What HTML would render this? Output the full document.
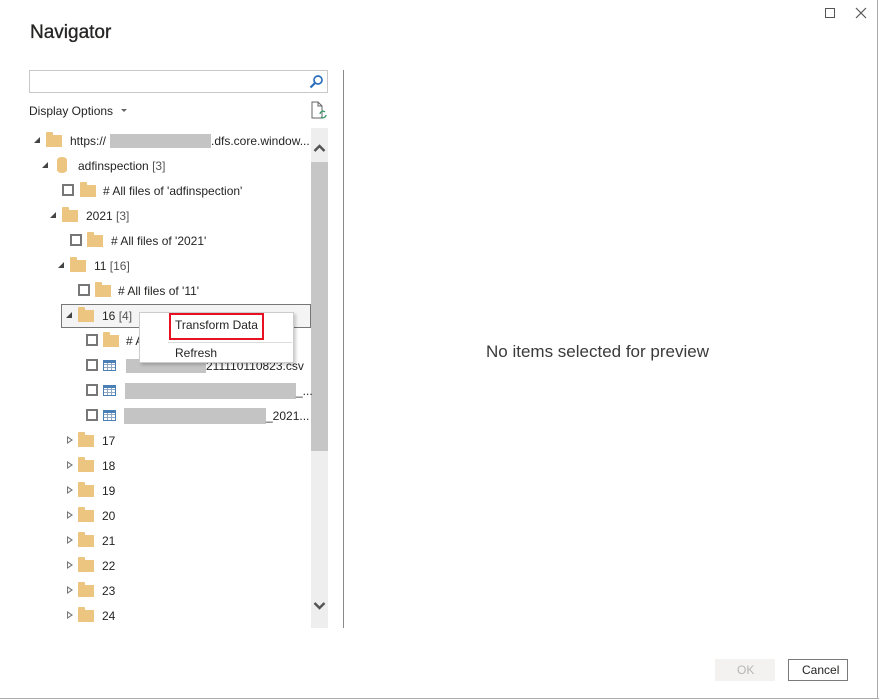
<!DOCTYPE html>
<html><head><meta charset="utf-8"><style>
*{box-sizing:border-box;margin:0;padding:0}
body{width:879px;height:700px;background:#fff;position:relative;overflow:hidden;font-family:"Liberation Sans",sans-serif;font-size:12px;color:#252423}
.a{position:absolute}
.t{position:absolute;white-space:nowrap;line-height:14px}
.f{position:absolute;width:16px;height:12px;background:#ecc581}
.f:before{content:"";position:absolute;left:0;top:-3px;width:7px;height:3px;background:#ecc581;border-radius:1px 1px 0 0}
.cb{position:absolute;width:12px;height:12px;border:2px solid #777;background:#fff}
.tri{position:absolute;width:0;height:0;border-left:6px solid transparent;border-bottom:6px solid #444}
.tro{position:absolute;width:0;height:0;border-top:4px solid transparent;border-bottom:4px solid transparent;border-left:6px solid #777}
.tro:after{content:"";position:absolute;left:-5px;top:-2px;border-top:2px solid transparent;border-bottom:2px solid transparent;border-left:3px solid #fff}
.g{position:absolute;height:14px;background:#c4c4c4}
.tb{position:absolute;width:13px;height:11px;border:1px solid #4a7fb5;background:
linear-gradient(#4a7fb5,#4a7fb5) 0 0/100% 2px no-repeat,
repeating-linear-gradient(90deg,transparent 0 3px,#8fa8c4 3px 4px),
repeating-linear-gradient(0deg,transparent 0 2px,#8fa8c4 2px 3px)}
</style></head><body>
<div class="a" style="right:1px;top:0;width:1px;height:699px;background:#aaa"></div>
<div class="a" style="left:0;bottom:1px;width:879px;height:1px;background:#aaa"></div>
<div class="a" style="left:825px;top:8px;width:10px;height:10px;border:1px solid #555"></div>
<svg class="a" style="left:855px;top:7px" width="12" height="12"><path d="M1 1L11 11M11 1L1 11" stroke="#555" stroke-width="1.2"/></svg>
<div class="t" style="left:30px;top:22px;font-size:19px;line-height:22px;color:#252423;-webkit-text-stroke:0.3px #252423">Navigator</div>
<div class="a" style="left:29px;top:70px;width:299px;height:23px;border:1px solid #c8c8c8"></div>
<svg class="a" style="left:309px;top:74px" width="15" height="15"><circle cx="9" cy="6" r="4" fill="none" stroke="#2a6ebb" stroke-width="1.7"/><path d="M6 9L1.5 13.5" stroke="#2a6ebb" stroke-width="2.2"/></svg>
<div class="t" style="left:29px;top:104px">Display Options</div>
<div class="a" style="left:121px;top:109px;border-left:3px solid transparent;border-right:3px solid transparent;border-top:3px solid #666"></div>
<svg class="a" style="left:311px;top:101px" width="17" height="20"><path d="M1 1H7L11 5V17H1Z" fill="#fff" stroke="#666"/><path d="M7 1V5H11" fill="none" stroke="#666"/><path d="M9 13a3 3 0 0 1 5-2M15 14a3 3 0 0 1-5 2" fill="none" stroke="#3a9a6a" stroke-width="1.3"/></svg>
<div class="a" style="left:311px;top:128px;width:17px;height:500px;background:#eeeeee"></div>
<div class="a" style="left:311px;top:162px;width:17px;height:289px;background:#c6c6c6"></div>
<svg class="a" style="left:313px;top:143px" width="13" height="10"><path d="M1.5 8L6.5 3L11.5 8" fill="none" stroke="#555" stroke-width="2.5"/></svg>
<svg class="a" style="left:313px;top:601px" width="13" height="10"><path d="M1.5 2L6.5 7L11.5 2" fill="none" stroke="#555" stroke-width="2.5"/></svg>
<div class="a" style="left:343px;top:70px;width:1px;height:558px;background:#8a8a8a"></div>
<div class="tri" style="left:34px;top:137px"></div><div class="f" style="left:46px;top:135px"></div>
<div class="t" style="left:70px;top:134px">https://</div><div class="g" style="left:110px;top:134px;width:101px"></div><div class="t" style="left:211px;top:134px">.dfs.core.window...</div>
<div class="tri" style="left:42px;top:162px"></div>
<div class="a" style="left:57px;top:157px;width:10px;height:16px;background:#ecc581;border-radius:5px/3px"></div>
<div class="t" style="left:78px;top:159px">adfinspection <span style="color:#555">[3]</span></div>
<div class="cb" style="left:62px;top:184px"></div><div class="f" style="left:80px;top:185px"></div><div class="t" style="left:103px;top:184px"># All files of 'adfinspection'</div>
<div class="tri" style="left:50px;top:212px"></div><div class="f" style="left:62px;top:210px"></div><div class="t" style="left:86px;top:209px">2021 <span style="color:#555">[3]</span></div>
<div class="cb" style="left:70px;top:234px"></div><div class="f" style="left:87px;top:235px"></div><div class="t" style="left:111px;top:234px"># All files of '2021'</div>
<div class="tri" style="left:58px;top:262px"></div><div class="f" style="left:70px;top:260px"></div><div class="t" style="left:94px;top:259px">11 <span style="color:#555">[16]</span></div>
<div class="cb" style="left:78px;top:284px"></div><div class="f" style="left:95px;top:285px"></div><div class="t" style="left:118px;top:284px"># All files of '11'</div>
<div class="a" style="left:61px;top:304px;width:250px;height:24px;border:1px solid #777;background:#f4f4f4"></div>
<div class="tri" style="left:66px;top:312px"></div><div class="f" style="left:78px;top:310px"></div><div class="t" style="left:102px;top:309px">16 <span style="color:#555">[4]</span></div>
<div class="cb" style="left:86px;top:334px"></div><div class="f" style="left:103px;top:335px"></div><div class="t" style="left:126px;top:334px"># A</div>
<div class="cb" style="left:86px;top:359px"></div><div class="tb" style="left:103px;top:360px"></div><div class="g" style="left:126px;top:359px;width:80px"></div><div class="t" style="left:206px;top:359px">211110110823.csv</div>
<div class="cb" style="left:86px;top:384px"></div><div class="tb" style="left:103px;top:385px"></div><div class="g" style="left:125px;top:383px;width:171px;height:16px"></div><div class="t" style="left:296px;top:384px">_...</div>
<div class="cb" style="left:86px;top:409px"></div><div class="tb" style="left:103px;top:410px"></div><div class="g" style="left:124px;top:408px;width:142px;height:16px"></div><div class="t" style="left:266px;top:409px">_2021...</div>
<div class="tro" style="left:67px;top:436px"></div><div class="f" style="left:78px;top:435px"></div><div class="t" style="left:102px;top:434px">17</div>
<div class="tro" style="left:67px;top:461px"></div><div class="f" style="left:78px;top:460px"></div><div class="t" style="left:102px;top:459px">18</div>
<div class="tro" style="left:67px;top:486px"></div><div class="f" style="left:78px;top:485px"></div><div class="t" style="left:102px;top:484px">19</div>
<div class="tro" style="left:67px;top:511px"></div><div class="f" style="left:78px;top:510px"></div><div class="t" style="left:102px;top:509px">20</div>
<div class="tro" style="left:67px;top:536px"></div><div class="f" style="left:78px;top:535px"></div><div class="t" style="left:102px;top:534px">21</div>
<div class="tro" style="left:67px;top:561px"></div><div class="f" style="left:78px;top:560px"></div><div class="t" style="left:102px;top:559px">22</div>
<div class="tro" style="left:67px;top:586px"></div><div class="f" style="left:78px;top:585px"></div><div class="t" style="left:102px;top:584px">23</div>
<div class="tro" style="left:67px;top:611px"></div><div class="f" style="left:78px;top:610px"></div><div class="t" style="left:102px;top:609px">24</div>
<div class="a" style="left:139px;top:312px;width:155px;height:51px;background:#fff;border:1px solid #ccc;box-shadow:2px 2px 3px rgba(0,0,0,.2)"></div>
<div class="a" style="left:169px;top:313px;width:95px;height:27px;border:2px solid #e81123"></div>
<div class="t" style="left:175px;top:318px">Transform Data</div>
<div class="a" style="left:168px;top:342px;width:124px;height:1px;background:#ddd"></div>
<div class="t" style="left:175px;top:346px">Refresh</div>
<div class="t" style="left:486px;top:342px;font-size:17px;line-height:20px;color:#3a3a3a">No items selected for preview</div>
<div class="a" style="left:715px;top:659px;width:60px;height:22px;background:#f3f2f1"></div>
<div class="t" style="left:737px;top:663px;color:#b5b5b5">OK</div>
<div class="a" style="left:788px;top:659px;width:60px;height:22px;border:1px solid #7a7a7a"></div>
<div class="t" style="left:802px;top:663px">Cancel</div>
</body></html>
